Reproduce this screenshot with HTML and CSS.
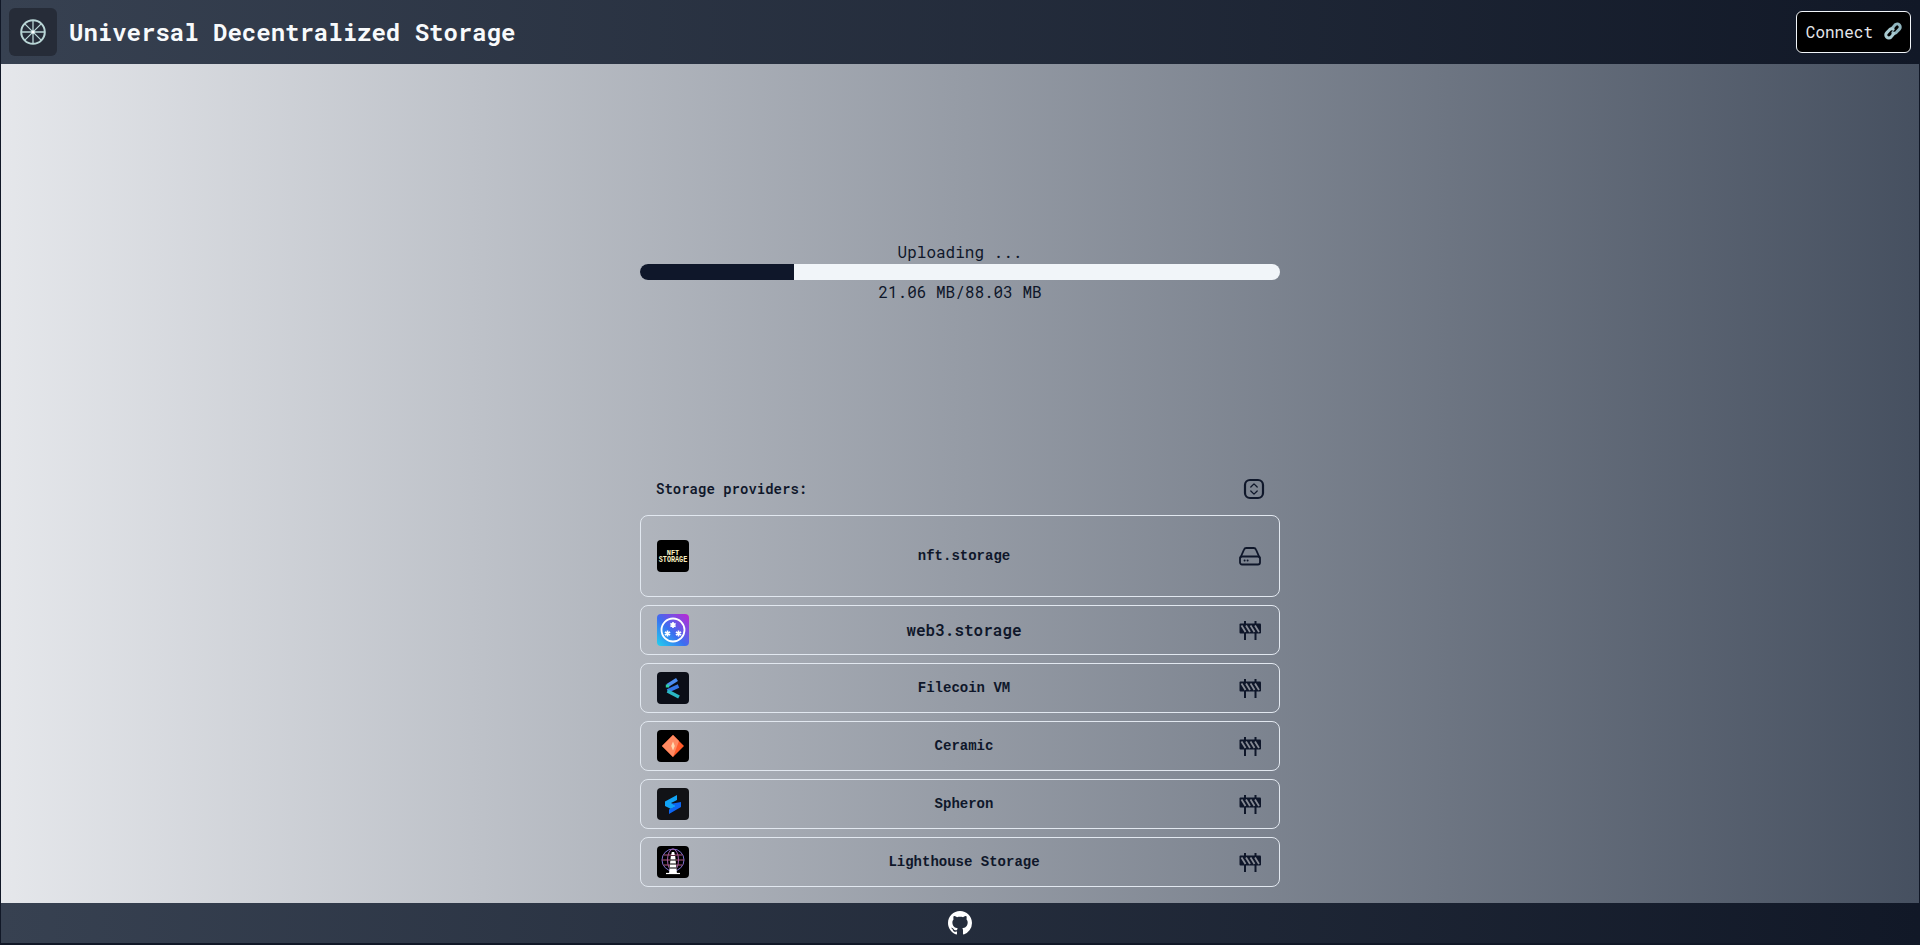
FILE: index.html
```html
<!DOCTYPE html>
<html lang="en">
<head>
<meta charset="utf-8">
<title>Universal Decentralized Storage</title>
<link rel="stylesheet" href="styles.css">
</head>
<body>
<header class="topbar">
  <div class="brand">
    <div class="logo">
      <svg viewBox="0 0 32 32" width="32" height="32" fill="none" stroke="#b9d6d6" stroke-width="2">
        <circle cx="16" cy="16" r="11.800"/>
        <path d="M16 4V28M4 16H28M7.600 7.600 24.400 24.400M24.400 7.600 7.600 24.400" stroke-width="1.300"/>
        <circle cx="16" cy="16" r="1.600" fill="#fff" stroke="none"/>
      </svg>
    </div>
    <h1 class="title">Universal Decentralized Storage</h1>
  </div>
  <button class="connect"><span>Connect</span><span class="link-emoji">
    <svg viewBox="0 0 20 20" width="20" height="20" fill="none" stroke-width="3" stroke-linecap="round">
      <path d="M9 7.500l3-3.600a3 3 0 0 1 4.400 4.200l-3 3.200a3 3 0 0 1-3.600.400" stroke="#8fb4bd"/>
      <path d="M11 12.500l-3 3.600a3 3 0 0 1-4.400-4.200l3-3.200a3 3 0 0 1 3.600-.400" stroke="#a9cbd2"/>
    </svg></span></button>
</header>
<main class="content">
  <section class="upload">
    <div class="status">Uploading ...</div>
    <div class="track"><div class="fill" style="width:24%"></div></div>
    <div class="status">21.06 MB/88.03 MB</div>
  </section>
  <section class="providers">
    <div class="providers-head">
      <span class="providers-label">Storage providers:</span>
      <svg class="selector" viewBox="0 0 24 24" width="24" height="24" fill="none" stroke="#0f172a" stroke-linecap="round" stroke-linejoin="round">
        <rect x="3" y="3" width="18" height="18" rx="5" stroke-width="2.200"/>
        <path d="M8.800 10 12 6.900 15.200 10M8.800 14 12 17.100 15.200 14" stroke-width="1.300"/>
      </svg>
    </div>
    <div class="row row-open">
      <svg class="thumb" viewBox="0 0 32 32"><rect width="32" height="32" rx="4" fill="#000"/>
        <text transform="translate(16 14.500) scale(1 1.150)" class="nft" font-size="7">NFT</text>
        <text transform="translate(16 22) scale(1 1.350)" class="nft" font-size="6.800">STORAGE</text></svg>
      <span class="name">nft.storage</span>
      <svg class="state" viewBox="0 0 24 24" width="24" height="24" fill="none" stroke="#0f172a" stroke-width="1.800" stroke-linecap="round" stroke-linejoin="round">
        <path d="M1.500 13.500 5 5.600A2.500 2.500 0 0 1 7.300 4h7.400a2.500 2.500 0 0 1 2.300 1.600l3.500 7.900"/>
        <rect x="1" y="12.500" width="20" height="8" rx="2"/>
        <path d="M5.500 16.500h.2M8.500 16.500h.2"/>
      </svg>
    </div>
    <div class="row">
      <svg class="thumb" viewBox="0 0 32 32">
        <defs><linearGradient id="w3" x1="0" y1="1" x2="1" y2="0"><stop offset="0" stop-color="#22d3ee"/><stop offset=".45" stop-color="#3b6ff0"/><stop offset="1" stop-color="#c026d3"/></linearGradient></defs>
        <rect width="32" height="32" rx="4" fill="url(#w3)"/>
        <circle cx="16" cy="16" r="11.500" fill="none" stroke="#fff" stroke-width="1.800"/>
        <path d="M16 8v6M13.400 9.500l5.200 3M18.600 9.500l-5.200 3M10.500 16.500v6M7.900 18l5.200 3M13.100 18l-5.200 3M21.500 16.500v6M18.900 18l5.200 3M24.100 18l-5.200 3" stroke="#fff" stroke-width="1.600"/>
      </svg>
      <span class="name name-large">web3.storage</span>
      <svg class="state" viewBox="0 0 24 24" width="24" height="24"><use href="#barrier"/></svg>
    </div>
    <div class="row">
      <svg class="thumb" viewBox="0 0 32 32"><rect width="32" height="32" rx="4" fill="#0b0e17"/>
        <path d="M20 7.500 10.500 13.500" stroke="#4c8df0" stroke-width="3.600"/>
        <path d="M21.500 14 10.500 19" stroke="#3576e8" stroke-width="3.600"/>
        <path d="M10.500 19 22 25" stroke="#2bb8c4" stroke-width="3.600"/>
        <path d="M10.500 12.500v3" stroke="#2fd0a8" stroke-width="3.400"/></svg>
      <span class="name">Filecoin VM</span>
      <svg class="state" viewBox="0 0 24 24" width="24" height="24"><use href="#barrier"/></svg>
    </div>
    <div class="row">
      <svg class="thumb" viewBox="0 0 32 32"><rect width="32" height="32" rx="4" fill="#000"/>
        <path d="M16 5 27 16 16 27 5 16Z" fill="#ff5a2a"/>
        <path d="M5 16 16 5l6 6-6 16Z" fill="#ff8a62"/>
        <path d="M16 11.500l1.800 4.500-1.800 4.500-1.800-4.500Z" fill="#ffd9b0"/></svg>
      <span class="name">Ceramic</span>
      <svg class="state" viewBox="0 0 24 24" width="24" height="24"><use href="#barrier"/></svg>
    </div>
    <div class="row">
      <svg class="thumb" viewBox="0 0 32 32"><rect width="32" height="32" rx="4" fill="#111216"/>
        <path d="M20 7 8 13.500V18l6 3 6-3-6-3 6-3Z" fill="#12a4f5"/>
        <path d="M24 14v5l-12 7v-4.500l7-3.500-4.500-2.300Z" fill="#0d66f2"/></svg>
      <span class="name">Spheron</span>
      <svg class="state" viewBox="0 0 24 24" width="24" height="24"><use href="#barrier"/></svg>
    </div>
    <div class="row">
      <svg class="thumb" viewBox="0 0 32 32"><rect width="32" height="32" rx="4" fill="#000"/>
        <g fill="none" stroke-width="1"><circle cx="16" cy="14" r="11" stroke="#7b6fd0"/><ellipse cx="16" cy="14" rx="5.500" ry="11" stroke="#a060b0"/><path d="M5 14h22M6.500 9h19M6.500 19h19" stroke="#b05a80"/></g>
        <path d="M14.800 6h2.400l.6 3h-3.600ZM13.800 10h4.400l1.700 17h-7.800Z" fill="#fff"/>
        <path d="M13 14h6M12.700 18h6.600M12.200 22h7.600" stroke="#000" stroke-width="1.200"/>
        <path d="M9 27.500h14" stroke="#fff" stroke-width="1.200"/></svg>
      <span class="name">Lighthouse Storage</span>
      <svg class="state" viewBox="0 0 24 24" width="24" height="24"><use href="#barrier"/></svg>
    </div>
  </section>
</main>
<footer class="bottombar">
  <svg viewBox="0 0 16 16" width="24" height="24" fill="#fff"><path d="M8 0C3.580 0 0 3.580 0 8c0 3.540 2.290 6.530 5.470 7.590.4.070.55-.17.55-.38 0-.19-.01-.82-.01-1.490-2.010.37-2.530-.49-2.690-.94-.09-.23-.48-.94-.82-1.130-.28-.15-.68-.52-.01-.53.630-.01 1.080.58 1.230.82.720 1.210 1.870.870 2.330.660.070-.520.280-.870.510-1.070-1.780-.200-3.640-.890-3.640-3.950 0-.870.310-1.590.820-2.150-.080-.200-.360-1.020.080-2.120 0 0 .670-.210 2.200.820.640-.180 1.320-.270 2-.270.680 0 1.360.090 2 .270 1.530-1.040 2.200-.820 2.200-.820.440 1.100.160 1.920.080 2.120.510.560.820 1.270.820 2.150 0 3.070-1.870 3.750-3.650 3.950.290.250.540.730.540 1.480 0 1.070-.010 1.930-.010 2.200 0 .210.150.460.550.380A8.013 8.013 0 0 0 16 8c0-4.420-3.580-8-8-8Z"/></svg>
</footer>
<svg class="sprite" width="0" height="0" aria-hidden="true">
  <symbol id="barrier" viewBox="0 0 24 24">
    <path d="M6 3v19M16.500 3v19" fill="none" stroke="#0f172a" stroke-width="2"/>
    <rect x="0.500" y="5.500" width="21.500" height="10" rx="1" fill="#0f172a"/>
    <path d="M2.500 7.500l4 6.500M7 7.500l4 6.500M11.500 7.500l4 6.500M16 7.500l4 6.500" fill="none" stroke="#fff" stroke-opacity=".5" stroke-width="1.800"/>
  </symbol>
</svg>
</body>
</html>
```

FILE: styles.css
```css
* { box-sizing: border-box; }
html, body { margin: 0; height: 100%; }
body {
  display: flex;
  flex-direction: column;
  height: 945px;
  overflow: hidden;
  padding: 0 1px 2px;
  background: #111827;
  font-family: "Roboto Mono", "DejaVu Sans Mono", monospace;
  color: #0f172a;
}
.topbar, .bottombar { background: linear-gradient(to right, #374151, #111827); }
.topbar {
  flex: 0 0 64px;
  display: flex;
  align-items: center;
  justify-content: space-between;
  padding: 0 8px;
}
.brand { display: flex; align-items: center; gap: 12px; }
.logo {
  width: 48px;
  height: 48px;
  border-radius: 6px;
  background: #262c38;
  display: flex;
  align-items: center;
  justify-content: center;
}
.title {
  margin: 0;
  font-size: 24px;
  font-weight: 700;
  color: #f8fafc;
}
.connect {
  height: 42px;
  padding: 0 7px 2px 9px;
  display: flex;
  align-items: center;
  gap: 10px;
  background: #000;
  color: #e5e7eb;
  border: 1px solid #f1f5f9;
  border-radius: 6px;
  font: 16px "Roboto Mono", "DejaVu Sans Mono", monospace;
}
.link-emoji { display: flex; }
.content {
  flex: 1;
  display: flex;
  flex-direction: column;
  align-items: center;
  background: linear-gradient(to right, #e5e7eb, #465060);
}
.upload {
  width: 640px;
  margin-top: 176px;
  display: flex;
  flex-direction: column;
  align-items: center;
}
.status { font-size: 16px; line-height: 24px; height: 24px; color: #0f172a; }
.track {
  width: 100%;
  height: 16px;
  border-radius: 8px;
  background: #f1f5f9;
  overflow: hidden;
}
.fill { height: 100%; background: #0f172a; }
.providers { width: 640px; margin-top: 171px; display: flex; flex-direction: column; gap: 8px; }
.providers-head {
  display: flex;
  justify-content: space-between;
  align-items: center;
  height: 28px;
  margin-bottom: 4px;
  padding: 0 14px 0 16px;
  font: 600 14px "Roboto Mono", monospace;
}
.providers-label { padding-bottom: 2px; }
.row {
  display: flex;
  align-items: center;
  height: 50px;
  padding: 0 16px;
  border: 1px solid #e2e8f0;
  border-radius: 8px;
}
.row-open { height: 82px; }
.thumb { width: 32px; height: 32px; flex: none; }
.nft { fill: #fbf0c0; font-family: "Liberation Mono", monospace; font-weight: 700; text-anchor: middle; }
.name {
  flex: 1;
  text-align: center;
  font: 700 14px "Liberation Mono", monospace;
}
.name-large { font: 600 16px "Roboto Mono", monospace; padding-bottom: 2px; }
.state { flex: none; }
.bottombar {
  flex: 0 0 40px;
  display: flex;
  align-items: center;
  justify-content: center;
}
.sprite { position: absolute; }
```
